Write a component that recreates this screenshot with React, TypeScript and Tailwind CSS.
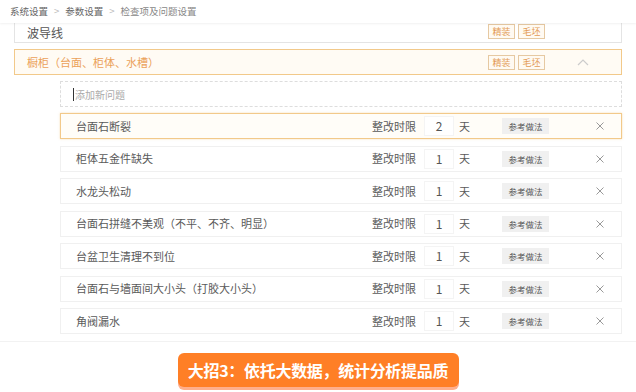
const font = { fontFamily: '"Noto Sans CJK SC", "Noto Sans", sans-serif' };

const problems = [
  { name: '台面石断裂', days: 2, active: true },
  { name: '柜体五金件缺失', days: 1 },
  { name: '水龙头松动', days: 1 },
  { name: '台面石拼缝不美观（不平、不齐、明显）', days: 1 },
  { name: '台盆卫生清理不到位', days: 1 },
  { name: '台面石与墙面间大小头（打胶大小头）', days: 1 },
  { name: '角阀漏水', days: 1 },
];

const Tag = ({ label }: { label: string }) => (
  <span className="h-[15px] w-[27px] border border-[#e6c9a2] bg-[#fffaf2] text-[9px] leading-[13px] text-center text-[#e39a55]">
    {label}
  </span>
);

const ProblemRow = ({ name, days, active }: { name: string; days: number; active?: boolean }) => (
  <div
    className={`h-[26px] flex items-center border ${
      active ? 'border-[#f2c98a] bg-[#fffdf8] shadow-[0_0_2px_rgba(240,190,110,0.5)]' : 'border-[#f0f0f0] bg-white'
    }`}
  >
    <div className="flex-1 pl-[15px] text-[11px] text-[#5a5a5a]">{name}</div>
    <div className="w-[52px] text-[11px] text-[#5a5a5a]">整改时限</div>
    <div className="w-[30px] h-[20px] flex items-center justify-center border border-[#f4f4f4] bg-white text-[12px] text-[#555]">
      {days}
    </div>
    <div className="w-[48px] pl-[5px] text-[11px] text-[#5a5a5a]">天</div>
    <div className="w-[47px] h-[16px] bg-[#f0f0f0] text-[8.5px] leading-[16px] text-center text-[#555]">参考做法</div>
    <div className="w-[72px] flex justify-center">
      <svg width="8" height="8" viewBox="0 0 8 8" className="ml-[30px]">
        <path d="M0.5 0.5 L7.5 7.5 M7.5 0.5 L0.5 7.5" stroke="#999" strokeWidth="1" fill="none" />
      </svg>
    </div>
  </div>
);

export default function App() {
  return (
    <div className="w-[636px] h-[392px] bg-white overflow-hidden flex flex-col" style={font}>
      <div className="h-[23px] shrink-0 flex items-center gap-[6px] pl-[10px] text-[9.5px] text-[#666] shadow-[0_1px_2px_rgba(0,0,0,0.06)] relative z-10 bg-white">
        <span>系统设置</span>
        <span className="text-[#bbb]">&gt;</span>
        <span>参数设置</span>
        <span className="text-[#bbb]">&gt;</span>
        <span className="text-[#888]">检查项及问题设置</span>
      </div>

      <div className="h-[319px] shrink-0 flex flex-col pl-[14px] pr-[14px] border-b border-[#f2f2f2]">
        <div className="h-[20px] flex items-center border border-t-0 border-[#e4e4e4] pl-[12px] pr-[76px]">
          <div className="flex-1 text-[12px] text-[#555]">波导线</div>
          <div className="flex gap-[3px] mb-[2px]">
            <Tag label="精装" />
            <Tag label="毛坯" />
          </div>
        </div>

        <div className="mt-[6px] h-[26px] flex items-center border border-[#f2c98a] bg-[#fffbf4] pl-[12px]">
          <div className="flex-1 text-[11px] text-[#eba159]">橱柜（台面、柜体、水槽）</div>
          <div className="flex gap-[3px]">
            <Tag label="精装" />
            <Tag label="毛坯" />
          </div>
          <div className="w-[76px] flex justify-center">
            <svg width="12" height="7" viewBox="0 0 12 7">
              <path d="M1 6 L6 1 L11 6" stroke="#ccc" strokeWidth="1.2" fill="none" />
            </svg>
          </div>
        </div>

        <div className="pl-[46px] flex flex-col">
          <div className="mt-[6px] h-[26px] flex items-center border border-dashed border-[#ddd] pl-[12px]">
            <span className="w-px h-[13px] bg-[#333] mr-[1px]" />
            <span className="text-[10px] text-[#aaa]">添加新问题</span>
          </div>
          <div className="mt-[6px] flex flex-col gap-[6.5px]">
            {problems.map((p) => (
              <ProblemRow key={p.name} {...p} />
            ))}
          </div>
        </div>
      </div>

      <div className="flex justify-center pt-[11px]">
        <div className="w-[281px] h-[34px] rounded-[6px] bg-[#ff7f26] shadow-[0_3px_0_#ffae8c] flex items-center justify-center text-white font-bold text-[16px] whitespace-nowrap tracking-[-0.3px]">
          大招3：依托大数据，统计分析提品质
        </div>
      </div>
    </div>
  );
}
